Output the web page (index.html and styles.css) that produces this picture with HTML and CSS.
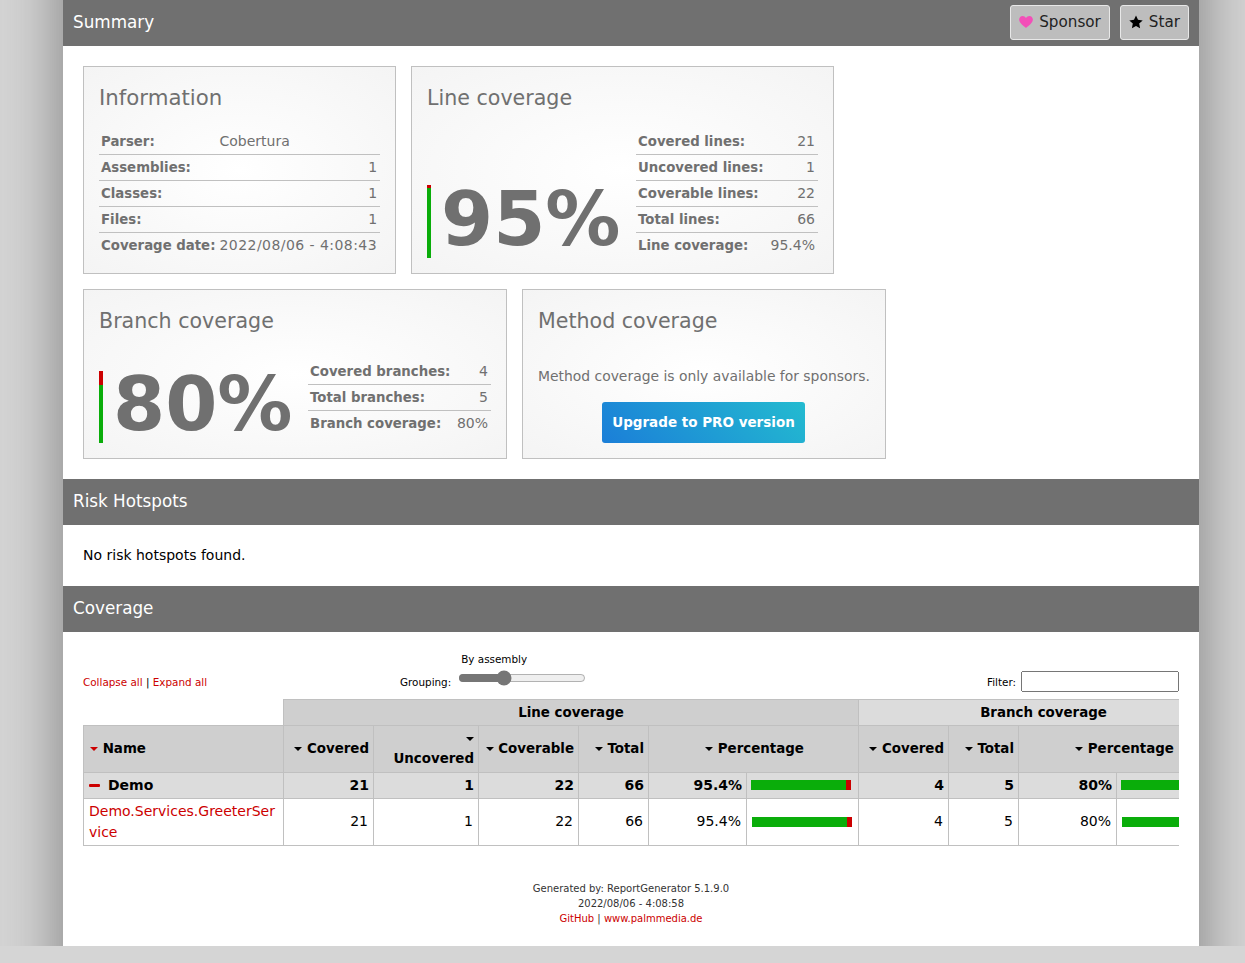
FILE: index.html
```html
<!DOCTYPE html>
<html lang="en">
<head>
  <meta charset="UTF-8">
  <meta name="viewport" content="width=device-width, initial-scale=1.0">
  <title>Summary - Coverage Report</title>
  <link rel="stylesheet" href="styles.css">
</head>
<body>
  <div class="page">
    <div class="container">
      <h1 class="section-title">
        <span>Summary</span>
        <span class="title-buttons">
          <a class="title-button" href="#">
            <svg class="heart-icon" viewBox="0 0 16 14"><path d="M8 14C5 11.4 0 8.2 0 4.2 0 1.8 1.8 0 4 0c1.700 0 3.100.9 4 2.300C8.900.9 10.300 0 12 0c2.200 0 4 1.800 4 4.200 0 4-5 7.200-8 9.800z"/></svg>
            Sponsor
          </a>
          <a class="title-button" href="#">
            <svg class="star-icon" viewBox="0 0 14 14"><path d="M7 .5l2 4.300 4.700.6-3.500 3.200.9 4.700L7 11l-4.100 2.300.9-4.700L.3 5.400 5 4.800z"/></svg>
            Star
          </a>
        </span>
      </h1>

      <div class="cards">
        <div class="card card-info">
          <h2>Information</h2>
          <div class="card-body">
            <table class="card-table">
              <tr><th>Parser:</th><td class="left">Cobertura</td></tr>
              <tr><th>Assemblies:</th><td>1</td></tr>
              <tr><th>Classes:</th><td>1</td></tr>
              <tr><th>Files:</th><td>1</td></tr>
              <tr><th>Coverage date:</th><td class="left date">2022/08/06 - 4:08:43</td></tr>
            </table>
          </div>
        </div>

        <div class="card card-line">
          <h2>Line coverage</h2>
          <div class="card-body">
            <div class="large">
              <span class="large-bar"><span class="large-red red-line"></span></span>
              <span class="large-value">95%</span>
            </div>
            <table class="card-table">
              <tr><th>Covered lines:</th><td>21</td></tr>
              <tr><th>Uncovered lines:</th><td>1</td></tr>
              <tr><th>Coverable lines:</th><td>22</td></tr>
              <tr><th>Total lines:</th><td>66</td></tr>
              <tr><th>Line coverage:</th><td>95.4%</td></tr>
            </table>
          </div>
        </div>

        <div class="card card-branch">
          <h2>Branch coverage</h2>
          <div class="card-body">
            <div class="large">
              <span class="large-bar"><span class="large-red red-branch"></span></span>
              <span class="large-value">80%</span>
            </div>
            <table class="card-table">
              <tr><th>Covered branches:</th><td>4</td></tr>
              <tr><th>Total branches:</th><td>5</td></tr>
              <tr><th>Branch coverage:</th><td>80%</td></tr>
            </table>
          </div>
        </div>

        <div class="card card-method">
          <h2>Method coverage</h2>
          <p class="method-note">Method coverage is only available for sponsors.</p>
          <a class="pro-button" href="#">Upgrade to PRO version</a>
        </div>
      </div>

      <h1 class="section-title"><span>Risk Hotspots</span></h1>
      <p class="no-risk">No risk hotspots found.</p>

      <h1 class="section-title"><span>Coverage</span></h1>

      <div class="toolbar">
        <div class="toolbar-links"><a href="#">Collapse all</a> | <a href="#">Expand all</a></div>
        <div class="grouping">
          <span class="grouping-label">Grouping:</span>
          <div class="grouping-control">
            <span class="grouping-value">By assembly</span>
            <input class="grouping-slider" type="range" min="-1" max="2" value="0">
          </div>
        </div>
        <div class="filter">
          <label for="filter">Filter:</label>
          <input id="filter" class="filter-input" type="text">
        </div>
      </div>

      <div class="table-wrap">
        <table class="overview">
          <colgroup>
            <col class="w-name"><col class="w-90"><col class="w-105"><col class="w-100"><col class="w-70"><col class="w-98"><col class="w-112">
            <col class="w-90"><col class="w-70"><col class="w-98"><col class="w-112">
          </colgroup>
          <thead>
            <tr class="group-row">
              <th class="blank"></th>
              <th colspan="6">Line coverage</th>
              <th colspan="4" class="light">Branch coverage</th>
            </tr>
            <tr class="head-row">
              <th class="name"><i class="sort sort-active"></i> Name</th>
              <th class="num"><i class="sort"></i> Covered</th>
              <th class="num stacked"><i class="sort"></i><br>Uncovered</th>
              <th class="num"><i class="sort"></i> Coverable</th>
              <th class="num"><i class="sort"></i> Total</th>
              <th colspan="2" class="mid"><i class="sort"></i> Percentage</th>
              <th class="num"><i class="sort"></i> Covered</th>
              <th class="num"><i class="sort"></i> Total</th>
              <th colspan="2" class="mid"><i class="sort"></i> Percentage</th>
            </tr>
          </thead>
          <tbody>
            <tr class="assembly-row">
              <th class="name"><i class="minus"></i>Demo</th>
              <th class="num">21</th>
              <th class="num">1</th>
              <th class="num">22</th>
              <th class="num">66</th>
              <th class="num">95.4%</th>
              <th class="bar-cell"><span class="bar"><span class="bar-green" style="width: 95%"></span></span></th>
              <th class="num">4</th>
              <th class="num">5</th>
              <th class="num">80%</th>
              <th class="bar-cell"><span class="bar"><span class="bar-green" style="width: 80%"></span></span></th>
            </tr>
            <tr class="class-row">
              <td class="name"><a href="#">Demo.Services.GreeterSer<wbr>vice</a></td>
              <td class="num">21</td>
              <td class="num">1</td>
              <td class="num">22</td>
              <td class="num">66</td>
              <td class="num">95.4%</td>
              <td class="bar-cell"><span class="bar"><span class="bar-green" style="width: 95%"></span></span></td>
              <td class="num">4</td>
              <td class="num">5</td>
              <td class="num">80%</td>
              <td class="bar-cell"><span class="bar"><span class="bar-green" style="width: 80%"></span></span></td>
            </tr>
          </tbody>
        </table>
      </div>

      <div class="footer">
        Generated by: ReportGenerator 5.1.9.0<br>
        2022/08/06 - 4:08:58<br>
        <a href="#">GitHub</a> | <a href="#">www.palmmedia.de</a>
      </div>
    </div>
  </div>
</body>
</html>
```

FILE: styles.css
```css
html, body {
  margin: 0;
  padding: 0;
}

body {
  background-color: #d5d5d5;
  color: #000;
  font-family: "DejaVu Sans", Verdana, sans-serif;
  font-size: 14px;
}

.page {
  position: relative;
  z-index: 0;
  overflow: hidden;
}

.container {
  position: relative;
  width: 1136px;
  height: 946px;
  margin-left: 63px;
  background-color: #fff;
}

/* side shadow runs past the bottom so .page cuts it off flat */
.container::before {
  content: "";
  position: absolute;
  top: -100px;
  bottom: -100px;
  left: 0;
  right: 0;
  box-shadow: 0 0 60px #7d7d7d;
  z-index: -1;
}

.section-title {
  display: flex;
  align-items: center;
  justify-content: space-between;
  box-sizing: border-box;
  height: 46px;
  margin: 0;
  padding: 0 10px 3px;
  background-color: #707070;
  color: #fff;
  font-size: 16.8px;
  font-weight: normal;
}

.title-buttons {
  display: flex;
  gap: 10px;
  margin-top: 2px;
}

.title-button {
  display: flex;
  align-items: center;
  gap: 6px;
  height: 31px;
  padding: 0 8px 2px;
  background-color: #bdbdbd;
  border: 1px solid #e8e8e8;
  border-radius: 3px;
  color: #222;
  font-size: 15.2px;
  text-decoration: none;
}

.heart-icon {
  width: 14px;
  height: 12px;
  fill: #f34fb8;
}

.star-icon {
  width: 14px;
  height: 14px;
  fill: #000;
}

.cards {
  display: flex;
  flex-wrap: wrap;
  gap: 15px;
  padding: 20px;
}

.card {
  display: flex;
  flex-direction: column;
  box-sizing: border-box;
  padding: 15px;
  border: 1px solid #c0c0c0;
  background: radial-gradient(ellipse, #fff, #f4f4f4);
  color: #707070;
}

.card h2 {
  margin: 1px 0 0;
  font-size: 20.6px;
  font-weight: normal;
  line-height: 30px;
}

.card-info h2 {
  font-size: 21.3px;
}

.card-info { width: 313px; height: 208px; }
.card-line { width: 423px; height: 208px; }
.card-branch { width: 424px; height: 170px; }
.card-method { width: 364px; height: 170px; }

.card-body {
  display: flex;
  align-items: flex-end;
  justify-content: space-between;
  margin-top: auto;
}

.card-table {
  border-collapse: collapse;
  font-size: 14px;
}

.card-info .card-table {
  width: 100%;
}

.card-line .card-table {
  width: 182px;
}

.card-branch .card-table {
  width: 183px;
  margin-bottom: 7px;
}

.card-table th {
  padding: 1px 2px 0;
  font-size: 13.3px;
  text-align: left;
  white-space: nowrap;
}

.card-table td {
  padding: 0 3px 0 2px;
  text-align: right;
  white-space: nowrap;
}

.card-table td.left {
  text-align: left;
}

.card-table td.date {
  letter-spacing: 0.45px;
}

.card-table tr {
  height: 26px;
  border-bottom: 1px solid #c0c0c0;
}

.card-table tr:last-child {
  border-bottom: none;
}

.large {
  display: flex;
  align-items: flex-end;
}

.large-bar {
  display: block;
  width: 4px;
  height: 73px;
  background-color: #0aad0a;
}

.card-branch .large-bar {
  height: 72px;
}

.large-red {
  display: block;
  background-color: #c00;
}

.red-line { height: 3px; }
.red-branch { height: 14px; }

.large-value {
  margin-left: 10px;
  margin-bottom: 3px;
  font-size: 75px;
  font-weight: bold;
  line-height: 71px;
}

.method-note {
  margin: 30px 0 0;
  font-size: 13.9px;
  line-height: 20px;
  white-space: nowrap;
}

.pro-button {
  display: block;
  width: 203px;
  margin: 16px 0 0 64px;
  background: linear-gradient(45deg, #1b7ed8, #23bbd0);
  border-radius: 3px;
  color: #fff;
  font-size: 13.5px;
  font-weight: bold;
  line-height: 41px;
  text-align: center;
  text-decoration: none;
}

.no-risk {
  height: 61px;
  margin: 0;
  padding: 0 20px;
  line-height: 60px;
}

.toolbar {
  display: flex;
  align-items: flex-end;
  height: 60px;
  padding: 0 20px;
  font-size: 10.4px;
}

.toolbar-links {
  width: 317px;
  padding-bottom: 4px;
}

.toolbar a,
.footer a {
  color: #c00;
  text-decoration: none;
}

.grouping {
  display: flex;
  align-items: flex-end;
  gap: 7px;
  flex: 1;
}

.grouping-label {
  padding-bottom: 4px;
}

.grouping-control {
  display: flex;
  flex-direction: column;
}

.grouping-value {
  margin-left: 3px;
  margin-bottom: 5px;
}

.grouping-slider {
  width: 128px;
  height: 16px;
  margin: 0 0 6px;
  accent-color: #767676;
}

.filter {
  display: flex;
  align-items: center;
  gap: 5px;
}

.filter-input {
  box-sizing: border-box;
  width: 158px;
  height: 21px;
  margin: 0;
}

.table-wrap {
  margin: 7px 20px 0;
  overflow: hidden;
}

.overview {
  table-layout: fixed;
  width: 1146px;
  border-collapse: collapse;
}

.w-name { width: 200px; }
.w-90 { width: 90px; }
.w-105 { width: 105px; }
.w-100 { width: 100px; }
.w-70 { width: 70px; }
.w-98 { width: 98px; }
.w-112 { width: 112px; }

.overview th,
.overview td {
  padding: 4px;
  border: 1px solid #c0c0c0;
}

.group-row th {
  height: 17px;
  background-color: #cfcfcf;
  font-size: 13.4px;
}

.group-row th.light {
  background-color: #dcdcdc;
}

.group-row th.blank {
  background: none;
  border-top: none;
  border-left: none;
}

.head-row th {
  height: 38px;
  padding-top: 3px;
  padding-bottom: 5px;
  background-color: #cfcfcf;
  font-size: 13.4px;
}

.head-row th.name {
  padding-left: 6px;
}

.head-row th.mid {
  padding-left: 6px;
}

.head-row th.stacked {
  padding-top: 0;
  padding-bottom: 1px;
  line-height: 20px;
}

.assembly-row th {
  height: 17px;
  padding-top: 3px;
  padding-bottom: 5px;
  background-color: #dcdcdc;
}

.assembly-row th.name {
  padding-left: 5px;
}

.class-row td {
  height: 38px;
  padding: 1px 5px 3px;
}

.class-row td.name {
  padding: 2px 5px;
  line-height: 21px;
}

.class-row td.bar-cell {
  padding: 2px 5px;
}

.overview .num {
  text-align: right;
}

.overview .name {
  text-align: left;
}

.overview .mid {
  text-align: center;
}

.overview a {
  color: #c00;
  text-decoration: none;
}

.sort {
  display: inline-block;
  vertical-align: middle;
  width: 0;
  height: 0;
  border-left: 4px solid transparent;
  border-right: 4px solid transparent;
  border-top: 4px solid #000;
}

.sort-active {
  border-top-color: #c00;
}

.minus {
  display: inline-block;
  vertical-align: middle;
  width: 11px;
  height: 3px;
  margin-right: 8px;
  background-color: #c00;
  border-radius: 1px;
}

.bar {
  display: flex;
  width: 100px;
  height: 10px;
  background-color: #c00;
}

.bar-green {
  display: block;
  height: 10px;
  background-color: #0aad0a;
}

.footer {
  margin-top: 35px;
  color: #333;
  font-size: 10px;
  line-height: 15px;
  text-align: center;
}
```
